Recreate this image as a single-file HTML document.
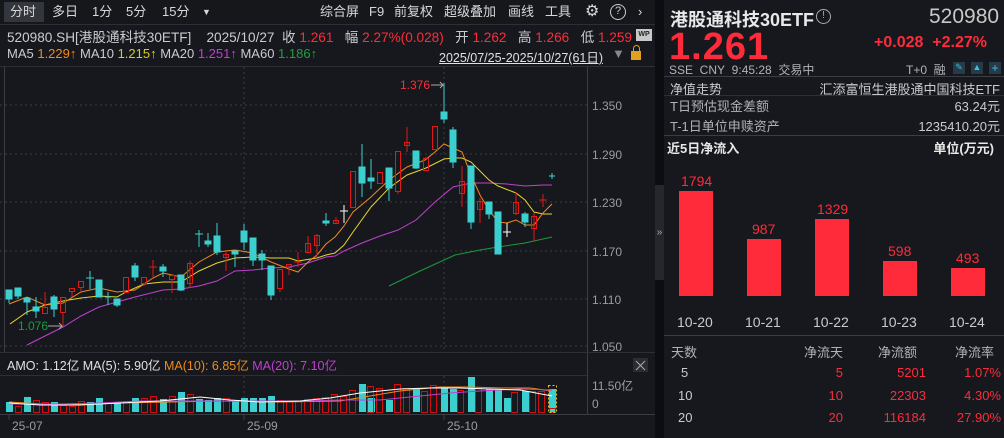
<!DOCTYPE html>
<html><head><meta charset="utf-8">
<style>
*{margin:0;padding:0;box-sizing:border-box}
body{width:1004px;height:438px;background:#16181d;font-family:"Liberation Sans","Noto Sans CJK SC",sans-serif;color:#c9cbd0;position:relative;overflow:hidden;font-size:12px}
.a{position:absolute;white-space:nowrap}
.r{color:#ff2b3a}
.tb{position:absolute;top:0;height:24px;line-height:24px;font-size:13px;color:#d8d8d8}
.sep{position:absolute;background:#2c2f35}
</style></head><body>
<div class="a" style="left:0;top:0;width:655px;height:24px;background:#15171b"></div>
<div class="a" style="left:4px;top:2px;width:40px;height:20px;background:#33363c"></div>
<div class="tb" style="left:10px">分时</div>
<div class="tb" style="left:52px">多日</div>
<div class="tb" style="left:92px">1分</div>
<div class="tb" style="left:126px">5分</div>
<div class="tb" style="left:162px">15分</div>
<div class="tb" style="left:202px;font-size:9px">▼</div>
<div class="tb" style="left:320px">综合屏</div>
<div class="tb" style="left:369px">F9</div>
<div class="tb" style="left:394px">前复权</div>
<div class="tb" style="left:444px">超级叠加</div>
<div class="tb" style="left:508px">画线</div>
<div class="tb" style="left:545px">工具</div>
<div class="tb" style="left:585px;font-size:16px">⚙</div>
<div class="a" style="left:610px;top:4px;width:16px;height:16px;border:1.5px solid #ccc;border-radius:50%;font-size:11px;line-height:13px;text-align:center">?</div>
<div class="tb" style="left:638px">›</div>
<div class="sep" style="left:0;top:24px;width:655px;height:1px"></div>
<div class="a" style="left:7px;top:26px;font-size:13.6px">520980.SH[港股通科技30ETF]&nbsp;&nbsp;&nbsp;&nbsp;2025/10/27&nbsp;&nbsp;收 <span class="r">1.261</span>&nbsp;&nbsp;&nbsp;幅 <span class="r">2.27%(0.028)</span>&nbsp;&nbsp;&nbsp;开 <span class="r">1.262</span>&nbsp;&nbsp;&nbsp;高 <span class="r">1.266</span>&nbsp;&nbsp;&nbsp;低 <span class="r">1.259</span></div>
<div class="a" style="left:636px;top:29px;width:16px;height:12px;background:#c8c8c8;color:#222;font-size:7px;line-height:12px;text-align:center;font-weight:bold">WP</div>
<div class="a" style="left:7px;top:46px;font-size:13px">MA5 <span style="color:#f08a1c">1.229↑</span> MA10 <span style="color:#d8cc28">1.215↑</span> MA20 <span style="color:#c040d0">1.251↑</span> MA60 <span style="color:#20a040">1.186↑</span></div>
<div class="a" style="left:439px;top:47px;font-size:12.5px;text-decoration:underline;color:#e0e0e0">2025/07/25-2025/10/27(61日)</div>
<div class="a" style="left:612px;top:46px;color:#888;font-size:13px">▼</div>
<div class="a" style="left:631px;top:51px;width:10px;height:9px;background:#e0a020"></div>
<div class="a" style="left:633px;top:45px;width:7px;height:7px;border:1.5px solid #e0a020;border-bottom:none;border-radius:4px 4px 0 0"></div>
<div class="sep" style="left:0;top:66px;width:655px;height:1px"></div>

<svg class="a" style="left:0;top:0" width="660" height="438">
<g stroke="#3a3d44" stroke-dasharray="2,3" stroke-width="1">
<line x1="0" y1="105" x2="587" y2="105"/><line x1="0" y1="154" x2="587" y2="154"/><line x1="0" y1="202" x2="587" y2="202"/><line x1="0" y1="251" x2="587" y2="251"/><line x1="0" y1="299" x2="587" y2="299"/><line x1="0" y1="346" x2="587" y2="346"/>
<line x1="244" y1="67" x2="244" y2="352"/><line x1="444" y1="67" x2="444" y2="352"/>
<line x1="244" y1="376" x2="244" y2="412"/><line x1="444" y1="376" x2="444" y2="412"/>
</g>
<line x1="587.5" y1="67" x2="587.5" y2="414" stroke="#3a3d44"/>
<line x1="4.5" y1="67" x2="4.5" y2="352" stroke="#3a3d44"/>
<g fill="#9a9ca2" font-size="12" font-family="Liberation Sans">
<text x="592" y="110">1.350</text><text x="592" y="159">1.290</text><text x="592" y="207">1.230</text><text x="592" y="256">1.170</text><text x="592" y="304">1.110</text><text x="592" y="351">1.050</text>
<text x="592" y="390">11.50亿</text><text x="592" y="408">0</text>
</g>
<polyline fill="none" stroke="#c040d0" stroke-width="1" points="27,345 63,327 81,316 99,307 117,302 135,297 163,290 181,289 199,286 217,281 235,271 253,270 271,268 289,267 308,263 326,257 335,256 344,251 362,243 380,236 398,230 416,220 435,202 453,187 471,183 489,183 507,184 525,186 543,185 552,185"/>
<polyline fill="none" stroke="#1c9a3c" stroke-width="1" points="389,286 420,271 455,255 480,250 498,247 525,243 552,237"/>
<polyline fill="none" stroke="#e8d430" stroke-width="1" points="10,324 27,312 45,305 63,301 81,298 99,296 117,297 126,292 144,284 163,282 181,282 199,271 217,263 235,258 253,257 271,258 289,258 298,261 317,258 326,255 335,253 344,245 353,232 371,207 389,188 407,175 426,168 444,159 453,158 462,158 471,162 489,180 498,186 516,193 525,200 534,212 543,214 552,214"/>
<polyline fill="none" stroke="#f08a1c" stroke-width="1" points="9,304 27,297 45,305 63,303 81,292 99,288 117,292 135,290 153,278 163,273 181,277 199,262 217,252 235,250 253,253 271,262 289,269 298,272 308,262 317,255 326,244 335,237 344,226 353,212 371,197 389,180 407,167 425,160 435,152 444,144 453,148 462,152 471,175 480,195 489,210 498,222 507,223 516,220 525,225 534,225 543,213 552,204"/>
<g stroke-width="1">
<g stroke="#3ccfd0" fill="#3ccfd0">
<line x1="9" y1="290" x2="9" y2="303"/><rect x="6" y="290" width="6" height="9"/>
<line x1="18" y1="288" x2="18" y2="299"/><rect x="15" y="288" width="6" height="8"/>
<line x1="27" y1="298" x2="27" y2="315"/><rect x="24" y="298" width="6" height="4"/>
<line x1="36" y1="297" x2="36" y2="318"/><rect x="33" y="307" width="6" height="4"/>
<line x1="54" y1="295" x2="54" y2="317"/><rect x="51" y="297" width="6" height="12"/>
<line x1="90" y1="271" x2="90" y2="289"/><line x1="86" y1="278" x2="94" y2="278"/>
<line x1="99" y1="280" x2="99" y2="297"/><rect x="96" y="280" width="6" height="17"/>
<line x1="108" y1="292" x2="108" y2="305"/><line x1="105" y1="297" x2="111" y2="297"/>
<line x1="117" y1="299" x2="117" y2="307"/><rect x="114" y="299" width="6" height="6"/>
<line x1="135" y1="263" x2="135" y2="281"/><rect x="132" y="266" width="6" height="11"/>
<line x1="163" y1="264" x2="163" y2="277"/><rect x="160" y="267" width="6" height="4"/>
<line x1="181" y1="275" x2="181" y2="291"/><rect x="178" y="275" width="6" height="15"/>
<line x1="199" y1="230" x2="199" y2="247"/><line x1="195" y1="234" x2="203" y2="234"/>
<line x1="208" y1="233" x2="208" y2="247"/><rect x="205" y="241" width="6" height="3"/>
<line x1="217" y1="223" x2="217" y2="255"/><rect x="214" y="236" width="6" height="16"/>
<line x1="235" y1="251" x2="235" y2="267"/><rect x="232" y="251" width="6" height="3"/>
<line x1="244" y1="224" x2="244" y2="250"/><rect x="241" y="231" width="6" height="11"/>
<line x1="253" y1="238" x2="253" y2="266"/><rect x="250" y="238" width="6" height="22"/>
<line x1="262" y1="250" x2="262" y2="270"/><rect x="259" y="254" width="6" height="6"/>
<line x1="271" y1="266" x2="271" y2="300"/><rect x="268" y="266" width="6" height="29"/>
<line x1="326" y1="213" x2="326" y2="226"/><rect x="323" y="221" width="6" height="2"/>
<line x1="362" y1="144" x2="362" y2="197"/><rect x="359" y="167" width="6" height="16"/>
<line x1="371" y1="159" x2="371" y2="189"/><rect x="368" y="178" width="6" height="3"/>
<line x1="389" y1="168" x2="389" y2="201"/><rect x="386" y="168" width="6" height="20"/>
<line x1="416" y1="151" x2="416" y2="169"/><rect x="413" y="151" width="6" height="17"/>
<line x1="444" y1="83" x2="444" y2="123"/><rect x="441" y="112" width="6" height="7"/>
<line x1="453" y1="127" x2="453" y2="168"/><rect x="450" y="130" width="6" height="32"/>
<line x1="471" y1="166" x2="471" y2="229"/><rect x="468" y="166" width="6" height="56"/>
<line x1="489" y1="202" x2="489" y2="219"/><rect x="486" y="202" width="6" height="12"/>
<rect x="495" y="212" width="6" height="42"/>
<line x1="525" y1="212" x2="525" y2="227"/><rect x="522" y="214" width="6" height="8"/>
<line x1="552" y1="173" x2="552" y2="179"/><line x1="549" y1="176" x2="555" y2="176"/>
</g>
<g stroke="#e01818" fill="none">
<line x1="45" y1="292" x2="45" y2="307"/><rect x="42.5" y="307.5" width="5" height="6"/>
<line x1="63" y1="312" x2="63" y2="327"/><rect x="60.5" y="297.5" width="5" height="15"/>
<line x1="72" y1="291" x2="72" y2="297"/><rect x="69.5" y="288.5" width="5" height="3"/>
<line x1="81" y1="287" x2="81" y2="292"/><rect x="78.5" y="281.5" width="5" height="6"/>
<rect x="123.5" y="277.5" width="5" height="15"/>
<line x1="144" y1="283" x2="144" y2="286"/><rect x="141.5" y="277.5" width="5" height="6"/>
<line x1="153" y1="260" x2="153" y2="277"/><line x1="149" y1="267" x2="157" y2="267"/>
<line x1="172" y1="279" x2="172" y2="293"/><rect x="169.5" y="275.5" width="5" height="4"/>
<line x1="190" y1="261" x2="190" y2="288"/><rect x="187.5" y="263.5" width="5" height="20"/>
<line x1="226" y1="252" x2="226" y2="271"/><rect x="223.5" y="254.5" width="5" height="3"/>
<line x1="280" y1="288" x2="280" y2="292"/><rect x="277.5" y="269.5" width="5" height="19"/>
<line x1="289" y1="267" x2="289" y2="275"/><rect x="286.5" y="264.5" width="5" height="3"/>
<line x1="298" y1="252" x2="298" y2="267"/><line x1="294" y1="262" x2="302" y2="262"/>
<line x1="308" y1="236" x2="308" y2="253"/><rect x="305.5" y="243.5" width="5" height="9"/>
<line x1="317" y1="234" x2="317" y2="257"/><rect x="314.5" y="235.5" width="5" height="10"/>
<line x1="336" y1="217" x2="336" y2="223"/><rect x="333.5" y="220.5" width="5" height="3"/>
<rect x="350.5" y="171.5" width="5" height="36"/>
<rect x="377.5" y="172.5" width="5" height="11"/>
<line x1="398" y1="191" x2="398" y2="194"/><rect x="395.5" y="151.5" width="5" height="40"/>
<line x1="407" y1="127" x2="407" y2="152"/><rect x="404.5" y="142.5" width="5" height="3"/>
<line x1="426" y1="157" x2="426" y2="158"/><rect x="423.5" y="158.5" width="5" height="12"/>
<rect x="432.5" y="126.5" width="5" height="23"/>
<line x1="462" y1="166" x2="462" y2="207"/><rect x="459.5" y="181.5" width="5" height="12"/>
<line x1="480" y1="198" x2="480" y2="223"/><rect x="477.5" y="201.5" width="5" height="8"/>
<line x1="516" y1="192" x2="516" y2="215"/><rect x="513.5" y="202.5" width="5" height="11"/>
<line x1="534" y1="213" x2="534" y2="241"/><rect x="531.5" y="216.5" width="5" height="12"/>
<line x1="543" y1="194" x2="543" y2="207"/><line x1="539" y1="200" x2="547" y2="200"/>
</g>
<g stroke="#ffffff">
<line x1="344" y1="205" x2="344" y2="223"/><line x1="340" y1="211" x2="348" y2="211"/>
<line x1="507" y1="223" x2="507" y2="237"/><line x1="503" y1="232" x2="511" y2="232"/>
</g>
</g>
<text x="400" y="89" fill="#ff2b3a" font-size="12" font-family="Liberation Sans">1.376</text>
<polyline points="431,85 443,85 440,82 443,85 440,88" fill="none" stroke="#aaa"/>
<text x="18" y="330" fill="#1c9a3c" font-size="12" font-family="Liberation Sans">1.076</text>
<polyline points="48,326 62,326 59,323 62,326 59,329" fill="none" stroke="#aaa"/>
<line x1="0" y1="352.5" x2="655" y2="352.5" stroke="#2c2f35"/>
<line x1="0" y1="375.5" x2="587" y2="375.5" stroke="#2c2f35"/>
<line x1="0" y1="414.5" x2="655" y2="414.5" stroke="#3a3d44"/>
<rect x="633" y="358" width="15" height="14" fill="#2a2d33"/>
<path d="M636 361L645 370M645 361L636 370" stroke="#aaa"/>
<text x="7" y="370" font-size="12.5" font-family="Liberation Sans,Noto Sans CJK SC" fill="#e0e0e0">AMO: 1.12亿 MA(5): 5.90亿 <tspan fill="#f08a1c">MA(10): 6.85亿</tspan> <tspan fill="#c040d0">MA(20): 7.10亿</tspan></text>
<g fill="#3ccfd0">
<rect x="6" y="402" width="7" height="10"/><rect x="24" y="397" width="7" height="15"/><rect x="51" y="402" width="7" height="10"/><rect x="87" y="402" width="7" height="10"/><rect x="96" y="398" width="7" height="14"/><rect x="114" y="402" width="7" height="10"/><rect x="132" y="398" width="7" height="14"/><rect x="160" y="399" width="7" height="13"/><rect x="178" y="392" width="7" height="20"/><rect x="196" y="399" width="7" height="13"/><rect x="205" y="400" width="7" height="12"/><rect x="214" y="398" width="7" height="14"/><rect x="232" y="401" width="7" height="11"/><rect x="241" y="398" width="7" height="14"/><rect x="250" y="398" width="7" height="14"/><rect x="259" y="398" width="7" height="14"/><rect x="268" y="396" width="7" height="16"/><rect x="359" y="384" width="7" height="28"/><rect x="368" y="398" width="7" height="14"/><rect x="386" y="400" width="7" height="12"/><rect x="413" y="388" width="7" height="24"/><rect x="441" y="388" width="7" height="24"/><rect x="450" y="389" width="7" height="23"/><rect x="468" y="377" width="7" height="35"/><rect x="486" y="389" width="7" height="23"/><rect x="495" y="389" width="7" height="23"/><rect x="504" y="398" width="7" height="14"/><rect x="522" y="391" width="7" height="21"/><rect x="549" y="389" width="7" height="23"/>
</g>
<g fill="none" stroke="#d01010">
<rect x="15.5" y="406.5" width="6" height="6"/><rect x="33.5" y="400.5" width="6" height="12"/><rect x="42.5" y="402.5" width="6" height="10"/><rect x="60.5" y="405.5" width="6" height="7"/><rect x="69.5" y="406.5" width="6" height="6"/><rect x="78.5" y="401.5" width="6" height="11"/><rect x="105.5" y="402.5" width="6" height="10"/><rect x="123.5" y="401.5" width="6" height="11"/><rect x="141.5" y="398.5" width="6" height="14"/><rect x="150.5" y="396.5" width="6" height="16"/><rect x="169.5" y="396.5" width="6" height="16"/><rect x="187.5" y="394.5" width="6" height="18"/><rect x="223.5" y="398.5" width="6" height="14"/><rect x="277.5" y="400.5" width="6" height="12"/><rect x="286.5" y="401.5" width="6" height="11"/><rect x="295.5" y="401.5" width="6" height="11"/><rect x="304.5" y="399.5" width="6" height="13"/><rect x="313.5" y="398.5" width="6" height="14"/><rect x="322.5" y="397.5" width="6" height="15"/><rect x="331.5" y="394.5" width="6" height="18"/><rect x="340.5" y="396.5" width="6" height="16"/><rect x="349.5" y="390.5" width="6" height="22"/><rect x="367.5" y="386.5" width="6" height="26"/><rect x="376.5" y="388.5" width="6" height="24"/><rect x="394.5" y="384.5" width="6" height="28"/><rect x="403.5" y="388.5" width="6" height="24"/><rect x="421.5" y="391.5" width="6" height="21"/><rect x="430.5" y="385.5" width="6" height="27"/><rect x="457.5" y="390.5" width="6" height="22"/><rect x="475.5" y="388.5" width="6" height="24"/><rect x="511.5" y="392.5" width="6" height="20"/><rect x="529.5" y="391.5" width="6" height="21"/><rect x="538.5" y="391.5" width="6" height="21"/><rect x="549.5" y="408.5" width="6" height="4"/>
</g>
<rect x="548.5" y="385.5" width="8" height="27" fill="none" stroke="#e0c020" stroke-dasharray="2,2"/>
<polyline fill="none" stroke="#f08a1c" points="9,402 60,405 120,403 170,402 220,401 280,402 340,401 370,396 400,391 440,387 470,387 500,388 530,388 552,391"/>
<polyline fill="none" stroke="#c040d0" points="9,404 60,404 100,403 140,401 200,401 260,401 300,401 340,400 380,400 410,397 450,393 480,391 520,389 552,390"/>
<polyline fill="none" stroke="#ffffff" points="9,403 40,405 80,405 120,403 160,401 200,397 230,400 260,402 300,401 330,398 360,393 380,391 400,389 430,388 460,388 490,389 520,390 552,396"/>
<g stroke="#3a3d44"><line x1="9" y1="414" x2="9" y2="420"/><line x1="244" y1="414" x2="244" y2="420"/><line x1="444" y1="414" x2="444" y2="420"/></g>
<g fill="#9a9ca2" font-size="12" font-family="Liberation Sans"><text x="12" y="430">25-07</text><text x="247" y="430">25-09</text><text x="447" y="430">25-10</text></g>
</svg>
<div class="a" style="left:655px;top:0;width:9px;height:438px;background:#0c0d10"></div>
<div class="a" style="left:655px;top:185px;width:9px;height:95px;background:#25272d;color:#aaa;font-size:10px;line-height:95px;text-align:center">»</div>
<div class="a" style="left:670px;top:6px;font-size:18px;font-weight:bold;color:#e8e8e8">港股通科技30ETF</div>
<div class="a" style="left:816px;top:9px;width:15px;height:15px;border:1.5px solid #aaa;border-radius:50%;font-size:10px;line-height:12px;text-align:center;color:#aaa">!</div>
<div class="a" style="left:929px;top:5px;font-size:21px;color:#c8c8c8">520980</div>
<div class="a" style="left:669px;top:26px;font-size:38px;font-weight:bold;color:#ff2b3a;letter-spacing:1px">1.261</div>
<div class="a" style="left:874px;top:34px;font-size:16px;font-weight:bold;color:#ff2b3a">+0.028&nbsp;&nbsp;+2.27%</div>
<div class="a" style="left:669px;top:61px;font-size:12px;color:#b0b2b8">SSE&nbsp;&nbsp;CNY&nbsp;&nbsp;9:45:28&nbsp;&nbsp;交易中</div>
<div class="a" style="left:906px;top:61px;font-size:12px;color:#b0b2b8">T+0&nbsp;&nbsp;融</div>
<div class="a" style="left:953px;top:62px;width:12px;height:12px;background:#263a48;color:#3cc0e0;font-size:9px;text-align:center">✎</div>
<div class="a" style="left:971px;top:62px;width:12px;height:12px;background:#263a48;color:#3cc0e0;font-size:9px;text-align:center">▲</div>
<div class="a" style="left:989px;top:62px;width:12px;height:12px;background:#263a48;color:#3cc0e0;font-size:12px;line-height:12px;text-align:center">+</div>
<div class="sep" style="left:664px;top:76px;width:340px;height:1px;background:#3a3d44"></div>
<div class="a" style="left:670px;top:79px;font-size:13px">净值走势</div>
<div class="a" style="right:4px;top:79px;font-size:13px">汇添富恒生港股通中国科技ETF</div>
<div class="sep" style="left:664px;top:95px;width:340px;height:1px"></div>
<div class="a" style="left:670px;top:96px;font-size:13px;color:#b0b2b8">T日预估现金差额</div>
<div class="a" style="right:4px;top:96px;font-size:13px">63.24元</div>
<div class="a" style="left:670px;top:116px;font-size:13px;color:#b0b2b8">T-1日单位申赎资产</div>
<div class="a" style="right:4px;top:116px;font-size:13px">1235410.20元</div>
<div class="sep" style="left:664px;top:135px;width:340px;height:1px;background:#3a3d44"></div>
<div class="a" style="left:667px;top:138px;font-size:13px;font-weight:bold;color:#e8e8e8">近5日净流入</div>
<div class="a" style="right:10px;top:138px;font-size:13px;font-weight:bold;color:#e8e8e8">单位(万元)</div>
<div class="a" style="left:679px;top:191px;width:34px;height:105px;background:#ff2b3a"></div>
<div class="a" style="left:747px;top:239px;width:34px;height:57px;background:#ff2b3a"></div>
<div class="a" style="left:815px;top:219px;width:34px;height:77px;background:#ff2b3a"></div>
<div class="a" style="left:883px;top:261px;width:34px;height:35px;background:#ff2b3a"></div>
<div class="a" style="left:951px;top:268px;width:34px;height:28px;background:#ff2b3a"></div>
<div class="a r" style="left:681px;top:173px;font-size:14px">1794</div>
<div class="a r" style="left:752px;top:221px;font-size:14px">987</div>
<div class="a r" style="left:817px;top:201px;font-size:14px">1329</div>
<div class="a r" style="left:888px;top:243px;font-size:14px">598</div>
<div class="a r" style="left:956px;top:250px;font-size:14px">493</div>
<div class="a" style="left:677px;top:314px;font-size:14px">10-20</div>
<div class="a" style="left:745px;top:314px;font-size:14px">10-21</div>
<div class="a" style="left:813px;top:314px;font-size:14px">10-22</div>
<div class="a" style="left:881px;top:314px;font-size:14px">10-23</div>
<div class="a" style="left:949px;top:314px;font-size:14px">10-24</div>
<div class="sep" style="left:664px;top:335px;width:340px;height:1px;background:#3a3d44"></div>
<div class="a" style="left:671px;top:342px;font-size:13px;color:#b0b2b8">天数</div>
<div class="a" style="left:804px;top:342px;font-size:13px;color:#b0b2b8">净流天</div>
<div class="a" style="left:878px;top:342px;font-size:13px;color:#b0b2b8">净流额</div>
<div class="a" style="left:955px;top:342px;font-size:13px;color:#b0b2b8">净流率</div>
<div class="a" style="left:681px;top:365px;font-size:13px">5</div>
<div class="a" style="left:678px;top:388px;font-size:13px">10</div>
<div class="a" style="left:678px;top:410px;font-size:13px">20</div>
<div class="a r" style="right:161px;top:365px;font-size:13px">5</div>
<div class="a r" style="right:161px;top:388px;font-size:13px">10</div>
<div class="a r" style="right:161px;top:410px;font-size:13px">20</div>
<div class="a r" style="right:78px;top:365px;font-size:13px">5201</div>
<div class="a r" style="right:78px;top:388px;font-size:13px">22303</div>
<div class="a r" style="right:78px;top:410px;font-size:13px">116184</div>
<div class="a r" style="right:3px;top:365px;font-size:13px">1.07%</div>
<div class="a r" style="right:3px;top:388px;font-size:13px">4.30%</div>
<div class="a r" style="right:3px;top:410px;font-size:13px">27.90%</div>
</body></html>
